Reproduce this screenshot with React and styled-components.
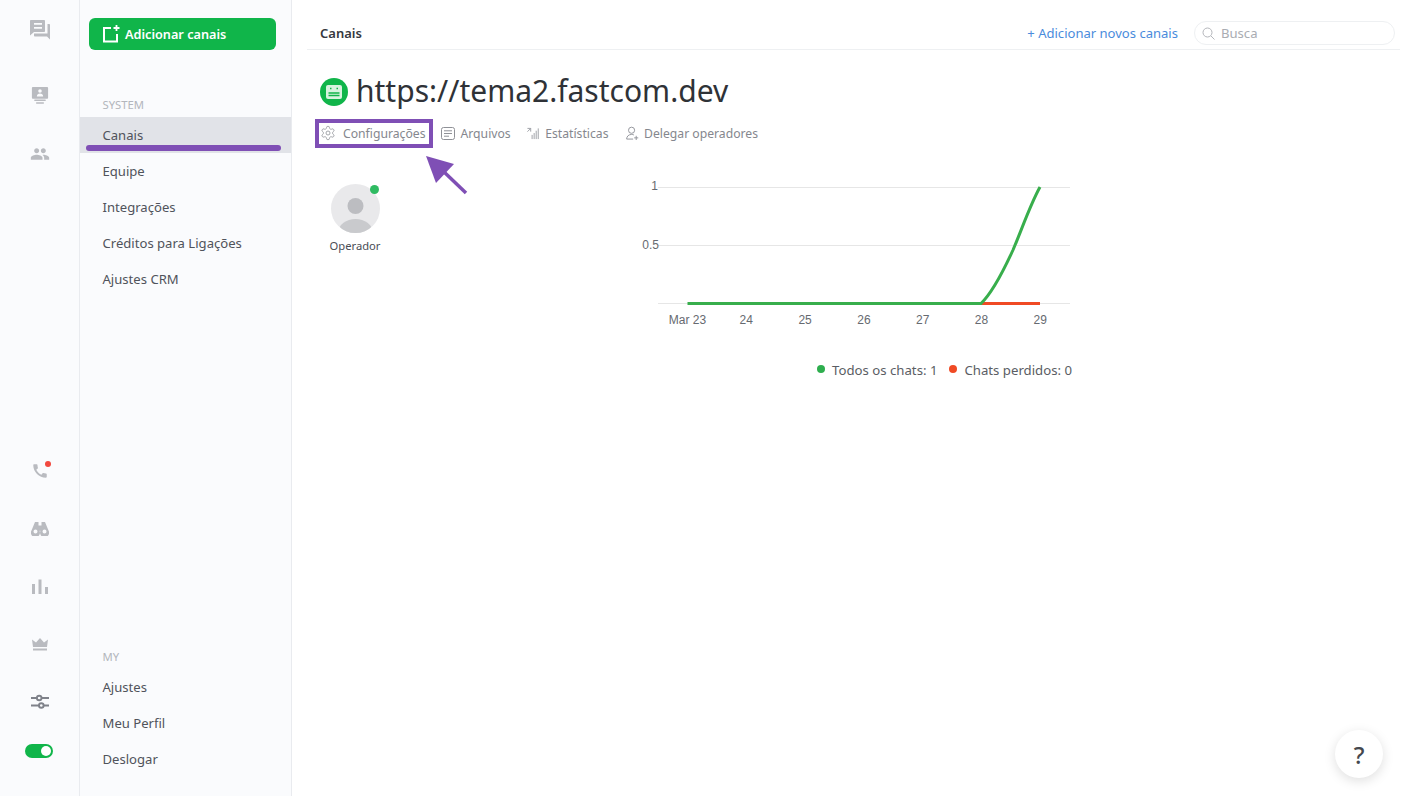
import React from "react";
import styled, { createGlobalStyle } from "styled-components";

const Global = createGlobalStyle`
  html, body { margin: 0; padding: 0; background: #fff; }
  body { font-family: "Noto Sans", "Open Sans", sans-serif; color: #4a4d55; }
  * { box-sizing: border-box; }
`;

const Page = styled.div`
  display: flex;
  height: 796px;
  width: 1412px;
  overflow: hidden;
  position: relative;
`;

const Rail = styled.nav`
  width: 80px;
  flex: none;
  background: #fafbfd;
  border-right: 1px solid #e9ebef;
  display: flex;
  flex-direction: column;
  justify-content: space-between;
  align-items: center;
  padding: 1px 0 24px;
`;
const RailGroup = styled.div`
  display: flex;
  flex-direction: column;
  align-items: center;
`;
const RailIcon = styled.div`
  width: 58px;
  height: ${p => p.$h || 58}px;
  display: flex;
  align-items: center;
  justify-content: center;
  position: relative;
  color: ${p => p.$color || "#b9bbc0"};
`;
const Dot = styled.span`
  position: absolute;
  left: 34px;
  top: 19px;
  width: 6px;
  height: 6px;
  border-radius: 50%;
  background: #f2493f;
`;
const Toggle = styled.div`
  width: 28px;
  height: 14px;
  border-radius: 7px;
  background: #10b54a;
  position: relative;
  margin-left: -1px;
  &::after {
    content: "";
    position: absolute;
    right: 2px;
    top: 2px;
    width: 10px;
    height: 10px;
    border-radius: 50%;
    background: #fff;
  }
`;

const Sidebar = styled.aside`
  width: 212px;
  flex: none;
  background: #fafbfd;
  border-right: 1px solid #e9ebef;
  display: flex;
  flex-direction: column;
  justify-content: space-between;
  padding: 18px 0 19px;
  position: relative;
`;
const AddButton = styled.button`
  margin-left: 9px;
  width: 187px;
  height: 32px;
  border: 0;
  border-radius: 6px;
  background: #10b54a;
  color: #fff;
  font: 600 12.7px "Noto Sans", sans-serif;
  display: flex;
  align-items: center;
  gap: 5px;
  padding: 0 13px;
`;
const SectionLabel = styled.div`
  font-size: 11.3px;
  line-height: 14px;
  color: #b3b6bc;
  padding-left: 22.5px;
  margin-bottom: ${p => p.$mb || 5}px;
  margin-top: ${p => p.$mt || 0}px;
`;
const MenuItem = styled.div`
  height: 36px;
  padding-left: 22.5px;
  display: flex;
  align-items: center;
  font-size: 13.1px;
  color: #50535b;
  background: ${p => (p.$active ? "#e1e3e8" : "transparent")};
`;
const Underline = styled.div`
  position: absolute;
  left: 6px;
  top: 145px;
  width: 195px;
  height: 6px;
  border-radius: 3px;
  background: #7f4fb5;
`;

const Main = styled.main`
  flex: 1;
  min-width: 0;
  padding: 0 12px 0 15px;
  position: relative;
`;
const Header = styled.header`
  height: 50px;
  padding: 24px 0 0 13px;
  border-bottom: 1px solid #eef0f2;
  display: flex;
  align-items: flex-start;
`;
const HeaderTitle = styled.div`
  font-size: 13px;
  line-height: 18px;
  font-weight: 600;
  color: #35383e;
  flex: 1;
`;
const HeaderLink = styled.a`
  font-size: 13.05px;
  line-height: 18px;
  color: #4a8bdc;
  margin-right: 16px;
`;
const SearchBox = styled.div`
  width: 201px;
  height: 24px;
  margin-top: -3px;
  margin-right: 5px;
  border: 1px solid #eef0f2;
  border-radius: 12px;
  display: flex;
  align-items: center;
  gap: 6px;
  padding-left: 7px;
  font-size: 13.1px;
  color: #a9acb2;
`;
const TitleRow = styled.div`
  display: flex;
  align-items: center;
  gap: 8px;
  padding: 19px 0 0 13px;
  height: 64px;
`;
const SiteBadge = styled.div`
  width: 28px;
  height: 28px;
  margin-top: 1px;
  border-radius: 50%;
  background: #10b54a;
  display: flex;
  align-items: center;
  justify-content: center;
`;
const Title = styled.h1`
  margin: -1px 0 0;
  font-size: 30px;
  line-height: 44px;
  font-weight: 400;
  color: #2f3237;
`;
const Tabs = styled.div`
  display: flex;
  align-items: center;
  padding-left: 13px;
  height: 38px;
`;
const Tab = styled.div`
  display: flex;
  align-items: center;
  gap: ${p => p.$gap || 5}px;
  font-size: 12.2px;
  color: #85878e;
  margin-right: ${p => p.$mr || 16.5}px;
`;
const Highlight = styled.div`
  position: absolute;
  left: 23px;
  top: 119px;
  width: 118px;
  height: 29px;
  border: 4px solid #7f4fb5;
`;
const Arrow = styled.svg`
  position: absolute;
  left: 130px;
  top: 150px;
`;
const Content = styled.div`
  display: flex;
  padding-top: 17px;
`;
const OperatorCol = styled.div`
  width: 323px;
  flex: none;
  padding: 15px 0 0 23px;
`;
const Operator = styled.div`
  width: 50px;
  display: flex;
  flex-direction: column;
  align-items: center;
  position: relative;
`;
const Avatar = styled.div`
  width: 49px;
  height: 49px;
  flex: none;
`;
const OnlineDot = styled.span`
  position: absolute;
  left: 40px;
  top: 1px;
  width: 9px;
  height: 9px;
  border-radius: 50%;
  background: #2fbb62;
`;
const OperatorName = styled.div`
  margin-top: 4px;
  font-size: 11.2px;
  line-height: 18px;
  color: #4a4d55;
  white-space: nowrap;
`;
const ChartCol = styled.div`
  width: 460px;
  flex: none;
`;
const Legend = styled.div`
  display: flex;
  justify-content: flex-end;
  gap: 12px;
  width: 442px;
  margin-top: 20px;
  font-size: 13.2px;
  line-height: 18px;
  color: #5a5d64;
`;
const LegendItem = styled.div`
  display: flex;
  align-items: center;
  gap: 7px;
  &::before {
    content: "";
    width: 8px;
    height: 8px;
    margin-top: -2px;
    border-radius: 50%;
    background: ${p => p.$color};
  }
`;
const Help = styled.button`
  position: absolute;
  left: 1335px;
  top: 730px;
  width: 48px;
  height: 48px;
  border: 0;
  border-radius: 50%;
  background: #fff;
  box-shadow: 0 3px 12px rgba(0, 0, 0, 0.13);
  font: 500 24px "Noto Sans", sans-serif;
  color: #45484e;
`;

const Forum = () => (
  <svg width="24" height="24" viewBox="0 0 24 24" fill="currentColor">
    <path d="M21 6h-1.500v9.500H6v2c0 .55.45 1 1 1h12l3 3V7c0-.55-.45-1-1-1z" />
    <path fillRule="evenodd" d="M3 2h13c.55 0 1 .45 1 1v10c0 .55-.45 1-1 1H6l-4 3.500V3c0-.55.45-1 1-1zm3 3v1.800h8V5H6zm0 4v1.800h8V9H6z" />
  </svg>
);
const Contact = () => (
  <svg width="18" height="22" viewBox="0 0 20 24" fill="currentColor">
    <path fillRule="evenodd" d="M2 2h16c.6 0 1 .4 1 1v11c0 .6-.4 1-1 1H2c-.6 0-1-.4-1-1V3c0-.6.4-1 1-1zm8 2.500a2 2 0 1 0 0 4 2 2 0 0 0 0-4zM6.500 12.500h7c0-2-1.500-3.200-3.500-3.200s-3.500 1.200-3.500 3.200z" />
    <rect x="3.500" y="16" width="13" height="1.600" rx=".8" />
    <rect x="5.500" y="19" width="9" height="1.600" rx=".8" />
  </svg>
);
const Group = () => (
  <svg width="20" height="20" viewBox="0 0 24 24" fill="currentColor">
    <path d="M16 11c1.660 0 2.990-1.340 2.990-3S17.660 5 16 5c-1.660 0-3 1.340-3 3s1.340 3 3 3zm-8 0c1.660 0 2.990-1.340 2.990-3S9.660 5 8 5C6.340 5 5 6.340 5 8s1.340 3 3 3zm0 2c-2.330 0-7 1.170-7 3.500V19h14v-2.500c0-2.330-4.670-3.500-7-3.500zm8 0c-.29 0-.62.02-.97.05 1.160.84 1.970 1.970 1.970 3.450V19h6v-2.500c0-2.330-4.670-3.500-7-3.500z" />
  </svg>
);
const Phone = () => (
  <svg width="18" height="18" viewBox="0 0 24 24" fill="currentColor">
    <path d="M20.010 15.380c-1.230 0-2.420-.2-3.530-.56-.35-.12-.74-.03-1.010.24l-1.570 1.970c-2.830-1.350-5.480-3.900-6.890-6.830l1.950-1.660c.27-.28.35-.67.24-1.020-.37-1.110-.56-2.300-.56-3.530 0-.54-.45-.99-.99-.99H4.190C3.650 3 3 3.240 3 3.990 3 13.280 10.730 21 20.010 21c.71 0 .99-.63.99-1.180v-3.450c0-.54-.45-.99-.99-.99z" />
  </svg>
);
const Binoculars = () => (
  <svg width="18" height="14" viewBox="0 0 18 14" fill="currentColor">
    <path fillRule="evenodd" d="M4 0h3.500v3.500h3V0H14l3.500 8.500A4.500 4.500 0 1 1 9.500 8.800h-1A4.500 4.500 0 1 1 .500 8.500L4 0zM4.500 7.500a2 2 0 1 0 0 4 2 2 0 0 0 0-4zm9 0a2 2 0 1 0 0 4 2 2 0 0 0 0-4z" />
  </svg>
);
const Bars = () => (
  <svg width="16" height="16" viewBox="0 0 16 16" fill="currentColor">
    <rect x="0" y="5" width="3" height="10" />
    <rect x="6.500" y="0.500" width="3" height="14.500" />
    <rect x="13" y="8" width="3" height="7" />
  </svg>
);
const Crown = () => (
  <svg width="16" height="14" viewBox="0 0 16 14" fill="currentColor">
    <path d="M0 1.500l4 3L8 0l4 4.500 4-3-1 7.500H1z" />
    <rect x="1" y="10.500" width="14" height="2" />
  </svg>
);
const Sliders = () => (
  <svg width="18" height="16" viewBox="0 0 18 16" fill="none" stroke="currentColor" strokeWidth="1.900">
    <path d="M0 4h6M10.500 4H18M0 11.500h8M12.500 11.500H18" />
    <circle cx="8.200" cy="4" r="2.300" />
    <circle cx="10.300" cy="11.500" r="2.300" />
  </svg>
);
const PlusFrame = () => (
  <svg width="18" height="18" viewBox="0 0 18 18" fill="none" stroke="#fff" strokeWidth="2">
    <path d="M9 3H2v13.500h13V9" />
    <path d="M14.500 0v6M11.500 3h6" strokeWidth="1.800" />
  </svg>
);
const Gear = () => (
  <svg width="16" height="16" viewBox="0 0 24 24" fill="none" stroke="#9b9da3" strokeWidth="1.400" strokeLinejoin="round">
    <path d="M12.220 2h-.44a2 2 0 0 0-2 2v.18a2 2 0 0 1-1 1.730l-.43.25a2 2 0 0 1-2 0l-.15-.08a2 2 0 0 0-2.730.73l-.22.38a2 2 0 0 0 .73 2.730l.15.1a2 2 0 0 1 1 1.720v.510a2 2 0 0 1-1 1.740l-.15.090a2 2 0 0 0-.73 2.730l.22.38a2 2 0 0 0 2.730.73l.15-.08a2 2 0 0 1 2 0l.43.25a2 2 0 0 1 1 1.730V20a2 2 0 0 0 2 2h.44a2 2 0 0 0 2-2v-.18a2 2 0 0 1 1-1.730l.43-.25a2 2 0 0 1 2 0l.15.08a2 2 0 0 0 2.730-.73l.22-.39a2 2 0 0 0-.73-2.730l-.15-.08a2 2 0 0 1-1-1.740v-.5a2 2 0 0 1 1-1.740l.15-.09a2 2 0 0 0 .73-2.730l-.22-.38a2 2 0 0 0-2.730-.73l-.15.08a2 2 0 0 1-2 0l-.43-.25a2 2 0 0 1-1-1.730V4a2 2 0 0 0-2-2z" />
    <circle cx="12" cy="12" r="3" />
  </svg>
);
const Note = () => (
  <svg width="14" height="13" viewBox="0 0 14 13" fill="none" stroke="#8f9197" strokeWidth="1">
    <rect x=".5" y=".5" width="13" height="12" rx="2" />
    <path d="M3 3.800h8M3 6.500h8M3 9.200h5" />
  </svg>
);
const Stat = () => (
  <svg width="13" height="13" viewBox="0 0 14 13" fill="none" stroke="#9b9da3" strokeWidth="1">
    <path d="M.5 1h3.500v3.500M4 1 .5 4.500M5.500 12.500V8M7.700 12.500V6M9.900 12.500V3.500M12.100 12.500V1" />
  </svg>
);
const UserPlus = () => (
  <svg width="13" height="15" viewBox="0 0 14 15" fill="none" stroke="#8f9197" strokeWidth="1">
    <circle cx="6" cy="4" r="3.300" />
    <path d="M.7 13.500c0-3 2.300-5 5.300-5 1 0 1.800.2 2.500.6M.7 13.500h7M11 10v4.500M8.800 12.200h4.400" />
  </svg>
);
const Magnifier = () => (
  <svg width="13" height="13" viewBox="0 0 13 13" fill="none" stroke="#b4b6bb" strokeWidth="1">
    <circle cx="5.500" cy="5.500" r="4.500" />
    <path d="M9 9l3.500 3.500" />
  </svg>
);
const SiteGlyph = () => (
  <svg width="16" height="14" viewBox="0 0 16 14">
    <rect width="16" height="14" rx="2" fill="#d8f3df" />
    <path d="M4 3.500h1.500M10.500 3.500H12M2.500 8h11M2.500 10.500h11" stroke="#10b54a" strokeWidth="1.300" />
  </svg>
);
const AvatarArt = () => (
  <svg width="49" height="49" viewBox="0 0 49 49">
    <defs>
      <clipPath id="av"><circle cx="24.500" cy="24.500" r="24.500" /></clipPath>
    </defs>
    <circle cx="24.500" cy="24.500" r="24.500" fill="#e9e9eb" />
    <circle cx="24.500" cy="22" r="8" fill="#bcbdc1" />
    <ellipse cx="24.500" cy="48" rx="17" ry="13" fill="#c9cacd" clipPath="url(#av)" />
  </svg>
);

const ticks = ["Mar 23", "24", "25", "26", "27", "28", "29"];
const ChartStyle = styled.svg`
  display: block;
  text { font: 12px "Liberation Sans", Arial, sans-serif; fill: #666a70; }
`;
const Chart = () => (
  <ChartStyle width="460" height="172" viewBox="0 0 460 172">
    {[18, 76, 134].map(y => (
      <line key={y} x1="28" x2="440" y1={y + 0.5} y2={y + 0.5} stroke="#e6e6e6" />
    ))}
    <text x="28" y="21" textAnchor="end">1</text>
    <text x="29" y="80" textAnchor="end">0.5</text>
    {ticks.map((t, i) => (
      <text key={t} x={57.5 + i * 58.8} y="155" textAnchor="middle">{t}</text>
    ))}
    <path d="M351 134.500H410" stroke="#f04a24" strokeWidth="2.800" fill="none" />
    <path d="M57.500 134.500H351C362 124 372 105 383 81C392 60 400 36 410 18" stroke="#38ae4c" strokeWidth="3" fill="none" />
  </ChartStyle>
);

export default function App() {
  return (
    <Page>
      <Global />
      <Rail>
        <RailGroup>
          <RailIcon $h={58}><Forum /></RailIcon>
          <RailIcon $h={74}><Contact /></RailIcon>
          <RailIcon $h={42}><Group /></RailIcon>
        </RailGroup>
        <RailGroup>
          <RailIcon><Phone /><Dot /></RailIcon>
          <RailIcon><Binoculars /></RailIcon>
          <RailIcon><Bars /></RailIcon>
          <RailIcon><Crown /></RailIcon>
          <RailIcon $color="#7f828a" $h={56}><Sliders /></RailIcon>
          <RailIcon $h={42}><Toggle /></RailIcon>
        </RailGroup>
      </Rail>
      <Sidebar>
        <div>
          <AddButton><PlusFrame />Adicionar canais</AddButton>
          <SectionLabel $mt={48}>SYSTEM</SectionLabel>
          <MenuItem $active>Canais</MenuItem>
          <MenuItem>Equipe</MenuItem>
          <MenuItem>Integrações</MenuItem>
          <MenuItem>Créditos para Ligações</MenuItem>
          <MenuItem>Ajustes CRM</MenuItem>
        </div>
        <div>
          <SectionLabel $mb={5}>MY</SectionLabel>
          <MenuItem>Ajustes</MenuItem>
          <MenuItem>Meu Perfil</MenuItem>
          <MenuItem>Deslogar</MenuItem>
        </div>
        <Underline />
      </Sidebar>
      <Main>
        <Header>
          <HeaderTitle>Canais</HeaderTitle>
          <HeaderLink>+ Adicionar novos canais</HeaderLink>
          <SearchBox><Magnifier />Busca</SearchBox>
        </Header>
        <TitleRow>
          <SiteBadge><SiteGlyph /></SiteBadge>
          <Title>https://tema2.fastcom.dev</Title>
        </TitleRow>
        <Tabs>
          <Tab $gap={7} $mr={15}><Gear />Configurações</Tab>
          <Tab $gap={6}><Note />Arquivos</Tab>
          <Tab $mr={17.5}><Stat />Estatísticas</Tab>
          <Tab><UserPlus />Delegar operadores</Tab>
        </Tabs>
        <Content>
          <OperatorCol>
            <Operator>
              <Avatar><AvatarArt /></Avatar>
              <OnlineDot />
              <OperatorName>Operador</OperatorName>
            </Operator>
          </OperatorCol>
          <ChartCol>
            <Chart />
            <Legend>
              <LegendItem $color="#2eae4e">Todos os chats: 1</LegendItem>
              <LegendItem $color="#f04a24">Chats perdidos: 0</LegendItem>
            </Legend>
          </ChartCol>
        </Content>
        <Highlight />
        <Arrow width="50" height="50" viewBox="0 0 50 50">
          <path d="M44 43L20 20" stroke="#7f4fb5" strokeWidth="3.500" />
          <path d="M4 6L32 14L14 33z" fill="#7f4fb5" />
        </Arrow>
      </Main>
      <Help>?</Help>
    </Page>
  );
}
